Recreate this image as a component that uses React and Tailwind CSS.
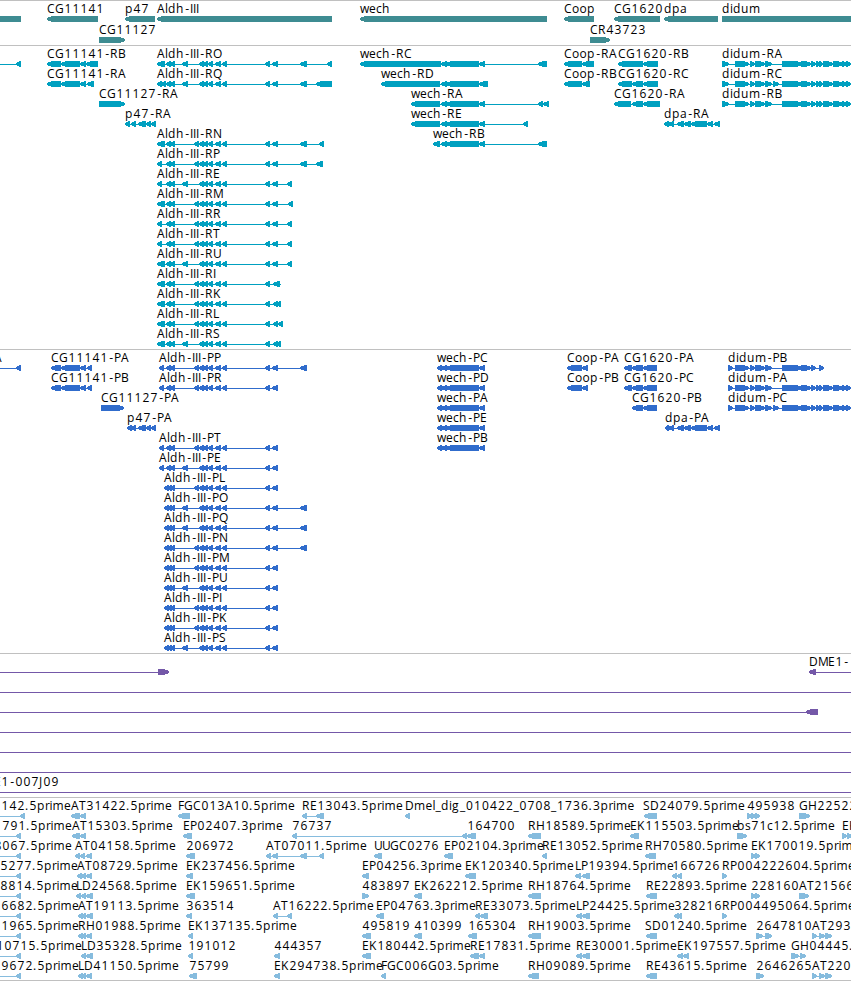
import React from 'react';

// Feature notation: label@labelX, then < or > for the strand, then exon ranges.
// A leading or trailing "~x" stretches the intron line to x.
const ALDH_A = '194-199 199-204 203-208 208-213 215-221 222-227 265-270';
const ALDH_B = '182-188 199-204 203-208 208-213 215-221 222-227 265-270';
const DIDUM_TAIL = '782-802 801-811 811-816 816-820 819-823 823-833 833-843 842-847 846-851';

const GENES = [
    [
        '@0 < -20-21',
        'CG11141@47 < 47-98',
        'p47@125 < 125-155',
        'Aldh-III@157 < 157-332',
        'wech@360 < 360-547',
        'Coop@564 < 564-594',
        'CG1620@614 < 614-660',
        'dpa@664 < 664-718',
        'didum@722 > 722-870',
    ],
    ['CG11127@99 > 99-125', 'CR43723@590 > 590-610'],
];

const TRANSCRIPTS = [
    [
        '@0 < ~0 16-21',
        'CG11141-RB@47 < 47-61 61-80 80-86 86-98',
        `Aldh-III-RO@157 < 157-165 166-171 170-175 ${ALDH_B} 272-278 300-307 327-332`,
        'wech-RC@360 < 360-441 441-447 446-479 479-485 538-547',
        'Coop-RA@564 < 564-582 582-594',
        'CG1620-RB@618 < 618-643 643-658',
        `didum-RA@722 > 722-729 735-749 750-755 755-765 765-772 ${DIDUM_TAIL}`,
    ],
    [
        'CG11141-RA@47 < 47-61 61-80 80-86 87-94',
        `Aldh-III-RQ@157 < 157-162 161-166 166-171 170-175 ${ALDH_B} 272-278 300-307 316-332`,
        'wech-RD@381 < 381-440 441-447 446-479 479-488',
        'Coop-RB@564 < 564-582 582-590',
        'CG1620-RC@618 < 618-632 632-643 643-658',
        `didum-RC@722 > 722-729 735-749 750-755 755-765 765-772 773-779 ${DIDUM_TAIL}`,
    ],
    [
        'CG11127-RA@99 > 99-125',
        'wech-RA@411 < 411-440 441-447 446-479 479-485 538-543 543-549',
        'CG1620-RA@614 < 614-631 632-643 643-660',
        `didum-RB@722 > 722-729 735-749 750-755 755-765 765-772 ${DIDUM_TAIL}`,
    ],
    [
        'p47-RA@125 < 125-130 131-136 138-146 146-151 151-156',
        'wech-RE@411 < 411-440 441-447 446-479 479-485 523-528',
        'dpa-RA@664 < 664-669 668-674 677-684 684-691 691-707 707-713 714-720',
    ],
    [
        `Aldh-III-RN@157 < 157-165 166-171 170-175 ${ALDH_A} 272-278 300-307 319-324`,
        'wech-RB@433 < 433-440 441-447 446-479 479-485 538-547',
    ],
    [`Aldh-III-RP@157 < 157-162 166-171 170-175 ${ALDH_A} 272-278 300-307 316-323`],
    [`Aldh-III-RE@157 < 157-162 166-171 170-175 ${ALDH_B} 272-278 287-292`],
    [`Aldh-III-RM@157 < 157-165 166-171 170-175 ${ALDH_A} 272-278 288-293`],
    [`Aldh-III-RR@157 < 157-162 166-171 170-175 ${ALDH_A} 272-278 287-292`],
    [`Aldh-III-RT@157 < 157-162 166-171 170-175 ${ALDH_A} 272-278 287-292`],
    [`Aldh-III-RU@157 < 157-165 166-171 170-175 ${ALDH_B} 272-278 287-292`],
    [`Aldh-III-RI@157 < 157-165 166-171 170-175 ${ALDH_A} 273-280 ~281`],
    [`Aldh-III-RK@157 < 157-165 166-171 170-175 ${ALDH_A} 273-278 276-281`],
    [`Aldh-III-RL@157 < 157-165 166-171 170-175 ${ALDH_A} 273-278 278-283`],
    [`Aldh-III-RS@157 < 157-165 166-171 170-175 ${ALDH_B} 273-278 276-281`],
];

const PROTEINS = [
    [
        'A@-6 < ~0 16-21',
        'CG11141-PA@51 < 51-61 61-80 80-86 87-92',
        `Aldh-III-PP@159 < 159-164 166-171 170-175 ${ALDH_A} 272-278 300-307`,
        'wech-PC@437 < 437-442 441-447 446-479 479-485',
        'Coop-PA@567 < 567-582 582-588',
        'CG1620-PA@624 < 624-632 632-643 643-657',
        'didum-PB@728 > 728-733 735-749 750-755 755-765 765-772 782-802 801-811 811-816 819-824',
    ],
    [
        'CG11141-PB@51 < 51-61 61-80 80-86 87-92',
        `Aldh-III-PR@159 < 159-164 166-171 170-175 ${ALDH_A} 272-278`,
        'wech-PD@437 < 437-442 441-447 446-479 479-485',
        'Coop-PB@567 < 567-582 582-588',
        'CG1620-PC@624 < 624-632 632-643 643-657',
        `didum-PA@728 > 728-733 735-749 750-755 755-765 765-772 ${DIDUM_TAIL}`,
    ],
    [
        'CG11127-PA@101 > 101-124',
        'wech-PA@437 < 437-442 441-447 446-479 479-485',
        'CG1620-PB@632 < 632-643 643-657',
        `didum-PC@728 > 728-733 735-749 750-755 755-765 765-772 773-779 ${DIDUM_TAIL}`,
    ],
    [
        'p47-PA@127 < 127-132 131-136 138-146 146-151 151-156',
        'wech-PE@437 < 437-442 441-447 446-479 479-485',
        'dpa-PA@665 < 665-669 668-674 677-684 684-691 691-707 707-713 714-720',
    ],
    [
        `Aldh-III-PT@159 < 159-164 166-171 170-175 ${ALDH_A} 272-278`,
        'wech-PB@437 < 437-442 441-447 446-479 479-485',
    ],
    [`Aldh-III-PE@159 < 159-164 166-171 170-175 ${ALDH_B} 272-278`],
    [`Aldh-III-PL@164 < 164-169 167-172 170-175 ${ALDH_A} 272-278`],
    [`Aldh-III-PO@164 < 164-169 167-172 170-175 ${ALDH_B} 272-278 300-307`],
    [`Aldh-III-PQ@164 < 164-169 167-172 170-175 ${ALDH_B} 272-278 300-307`],
    [`Aldh-III-PN@164 < 164-169 167-172 170-175 ${ALDH_A} 272-278 300-307`],
    [`Aldh-III-PM@164 < 164-169 167-172 170-175 ${ALDH_A} 272-278`],
    [`Aldh-III-PU@164 < 164-169 167-172 170-175 ${ALDH_B} 272-278`],
    [`Aldh-III-PI@164 < 164-169 167-172 170-175 ${ALDH_A} 272-278`],
    [`Aldh-III-PK@164 < 164-169 167-172 170-175 ${ALDH_A} 272-278`],
    [`Aldh-III-PS@164 < 164-169 167-172 170-175 ${ALDH_B} 272-278`],
];

const CLONES = [
    ['@0 > ~0 158-169', 'DME1-@809 < 809-816 ~851'],
    ['@0 < ~0 ~851'],
    ['@0 < ~0 806-818'],
    ['@0 < ~0 ~851'],
    ['@0 < ~0 ~851'],
    ['@0 < ~0 ~851'],
    ['E1-007J09@-6 < ~0 ~851'],
];

const ESTS = [
    [
        '142.5prime@1 < ~0 20-25',
        'AT31422.5prime@71 < 71-80 80-86',
        'FGC013A10.5prime@178 < 178-190',
        'RE13043.5prime@302 < 302-307 316-324',
        'Dmel_dig_010422_0708_1736.3prime@405 < 405-410',
        'SD24079.5prime@643 < 644-657',
        '495938@747 > 747-752 751-756 755-760',
        'GH22522@799 > 799-810',
    ],
    [
        '791.5prime@2 < ~0 16-21',
        'AT15303.5prime@72 < 72-80 80-86',
        'EP02407.3prime@183 < 183-192',
        '76737@292 < 292-297 462-467 467-476',
        '164700@467 <',
        'RH18589.5prime@528 < 528-541',
        'EK115503.5prime@630 < 630-639',
        'bs71c12.5prime@737 > 737-747',
        'EK@842 > 842-847 847-852',
    ],
    [
        '8067.5prime@-6 < ~0 16-21',
        'AT04158.5prime@75 < 75-80 80-85 86-92',
        '206972@186 < 186-195',
        'AT07011.5prime@266 < 266-271 272-278 300-307 319-324',
        'UUGC0276@374 < 374-382',
        'EP02104.3prime@444 < 444-453',
        'RE13052.5prime@542 < 542-547',
        'RH70580.5prime@645 < 645-656',
        'EK170019.5prime@751 > 751-756 755-760',
    ],
    [
        '5277.5prime@0 < ~0 16-21',
        'AT08729.5prime@77 < 77-82 81-86 86-92',
        'EK237456.5prime@186 < 186-193',
        'EP04256.3prime@362 < 362-369',
        'EK120340.5prime@465 < 465-476',
        'LP19394.5prime@575 < 575-581 582-590',
        '166726@672 < 672-677 677-682',
        'RP004222604.5prime@722 > 722-727',
    ],
    [
        '8814.5prime@0 < ~0 16-21',
        'LD24568.5prime@76 < 76-81 81-86 86-93',
        'EK159651.5prime@186 < 186-195',
        '483897@362 > 362-369',
        'EK262212.5prime@414 < 414-422',
        'RH18764.5prime@528 < 528-541',
        'RE22893.5prime@646 < 646-657',
        '228160@751 > 751-756 755-760',
        'AT21566@799 > 799-809',
    ],
    [
        '6682.5prime@1 < ~0 16-21',
        'AT19113.5prime@78 < 78-83 81-86 86-93',
        '363514@186 < 186-192',
        'AT16222.5prime@273 < 273-278 287-292',
        'EP04763.3prime@376 < 376-384',
        'RE33073.5prime@475 < 475-480 480-488',
        'LP24425.5prime@576 < 576-582 582-590',
        '328216@674 < 674-679 677-682',
        'RP004495064.5prime@722 > 722-727',
    ],
    [
        '1965.5prime@1 < ~0 16-21',
        'RH01988.5prime@78 < 78-83 81-86 86-92',
        'EK137135.5prime@188 < 188-193',
        '495819@362 < 362-371',
        '410399@414 < 414-422',
        '165304@468 < 468-477',
        'RH19003.5prime@528 < 528-541',
        'SD01240.5prime@645 < 646-657',
        '2647810@756 > 756-763 765-770 767-772',
        'AT293@812 > 812-817 819-825 825-832',
    ],
    [
        '10715.5prime@-4 < ~0 16-21',
        'LD35328.5prime@81 < 81-86 86-93',
        '191012@188 < 188-193',
        '444357@274 < 274-280',
        'EK180442.5prime@362 < 362-371',
        'RE17831.5prime@470 < 470-479 479-485',
        'RE30001.5prime@576 < 576-582 582-590',
        'EK197557.5prime@677 < 677-683 683-689',
        'GH04445.@791 > 791-799 800-806',
    ],
    [
        '9672.5prime@1 < ~0 16-21',
        'LD41150.5prime@78 < 78-83 81-86 86-92',
        '75799@189 < 189-197',
        'EK294738.5prime@274 < 274-280',
        'FGC006G03.5prime@381 < 381-386',
        'RH09089.5prime@528 < 528-539',
        'RE43615.5prime@646 < 646-657',
        '2646265@756 > 756-764',
        'AT220@812 > 812-817 819-825 825-832',
    ],
];

const ADVANCE = {
    A: 8, B: 8, C: 8, D: 9, E: 7, F: 6, G: 9, H: 9, I: 3, J: 4, K: 8, L: 6, M: 10, N: 9,
    O: 9, P: 7, Q: 9, R: 8, S: 7, T: 7, U: 8, a: 7, b: 8, c: 6, d: 8, e: 7, g: 8,
    h: 8, i: 3, l: 3, m: 11.5, o: 7.5, p: 8, r: 4.5, s: 6, u: 8, w: 9, '-': 6, _: 5.5, '.': 4,
};

// Narrow characters sit in the middle of their cell.
const bearing = (ch) => {
    if (ch === '-') return 1.2;
    return /\d/.test(ch) ? 0.4 : 0;
};

const glyphPositions = (label, start) => {
    let x = start;
    return label.split('').map((ch) => {
        const at = x + bearing(ch);
        x += ADVANCE[ch] || 8;
        return at;
    });
};

const parseFeature = (text) => {
    const [head, strand, ...parts] = text.split(' ');
    const [label, x] = head.split('@');
    const exons = [];
    const ends = [];
    parts.forEach((part) => {
        if (part[0] === '~') {
            ends.push(Number(part.slice(1)));
            return;
        }
        const [, a, b] = part.match(/^(-?\d+)-(\d+)$/);
        exons.push([Number(a), Number(b)]);
        ends.push(Number(a), Number(b));
    });
    return { label, x: Number(x), strand, exons, from: Math.min(...ends), to: Math.max(...ends) };
};

const exonPoints = ([a, b], strand) => {
    const tip = Math.min(b - a - 1, 5);
    if (strand === '<') return `${a},19 ${a},17 ${a + tip},15 ${b},15 ${b},21 ${a + tip},21`;
    return `${b},19 ${b},17 ${b - tip},15 ${a},15 ${a},21 ${b - tip},21`;
};

const Feature = ({ feature }) => {
    const { label, x, strand, exons, from, to } = feature;
    return (
        <g>
            {to > from && <rect x={from} y="18" width={to - from} height="1" />}
            {exons.map((exon, i) => (
                <polygon key={i} points={exonPoints(exon, strand)} />
            ))}
            {label && (
                <text x={glyphPositions(label, x).join(' ')} y="12" className="fill-black text-[12px]">
                    {label}
                </text>
            )}
        </g>
    );
};

const Track = ({ rows, className, rowClass = 'h-5' }) => (
    <section className={`flex flex-col border-t border-[#c0c0c0] ${className}`}>
        {rows.map((row, i) => (
            <div key={i} className={rowClass}>
                <svg width="851" height="20" className="block overflow-visible fill-current" shapeRendering="crispEdges">
                    {row.map((text) => (
                        <Feature key={text} feature={parseFeature(text)} />
                    ))}
                </svg>
            </div>
        ))}
    </section>
);

export default function App() {
    return (
        <main className="w-[851px] h-[981px] overflow-hidden bg-white font-['Open_Sans','Noto_Sans',sans-serif]">
            <Track rows={GENES} className="pb-0.5 text-[#3e8c92]" rowClass="h-[21px]" />
            <Track rows={TRANSCRIPTS} className="pb-[3px] text-[#00a0c0]" />
            <Track rows={PROTEINS} className="pb-[3px] text-[#306ccc]" />
            <Track rows={CLONES} className="pb-[3px] text-[#7458a8]" />
            <Track rows={ESTS} className="border-b pb-0.5 text-[#86bcde]" />
        </main>
    );
}
